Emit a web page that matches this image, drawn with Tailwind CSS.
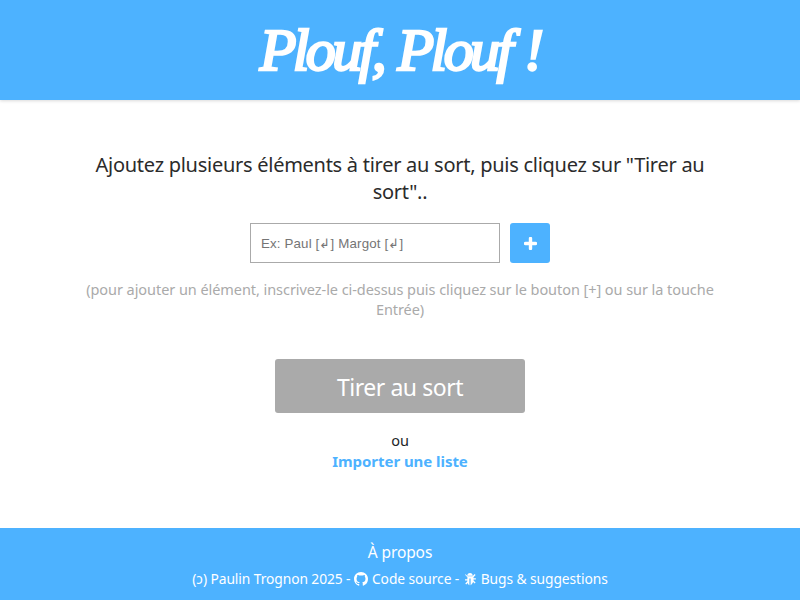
<!DOCTYPE html>
<html lang="fr">
<head>
    <meta charset="UTF-8">
    <meta name="viewport" content="width=device-width, initial-scale=1.0">
    <title>Plouf, Plouf !</title>
    <script src="https://cdn.jsdelivr.net/npm/@tailwindcss/browser@4"></script>
</head>
<body class="h-[600px] overflow-hidden bg-white font-['Noto_Sans',sans-serif] text-[#212529]">
    <div class="flex h-[600px] flex-col">
        <!-- Header -->
        <header class="flex h-[100px] items-center justify-center bg-[#4db2ff] shadow-[0_1px_3px_rgba(0,0,0,0.15)]">
            <h1 class="font-['Liberation_Serif',serif] text-[60px] font-normal italic leading-none tracking-[-3.6px] [word-spacing:3px] text-white [-webkit-text-stroke:2.5px_white]">Plouf, Plouf !</h1>
        </header>

        <!-- Main -->
        <main class="flex flex-1 flex-col items-center px-20 pt-[51px]">
            <p class="text-center text-[20px] leading-[27px] tracking-[-0.27px] text-[#2b2b2b]">Ajoutez plusieurs éléments à tirer au sort, puis cliquez sur "Tirer au sort"..</p>
            <div class="mt-[18px] flex items-center gap-2.5">
                <input type="text" placeholder="Ex: Paul [↲] Margot [↲]" class="h-10 w-[250px] border border-[#aaaaaa] px-2.5 font-['Liberation_Sans',sans-serif] text-[13.33px] tracking-[0.14px] outline-none placeholder:text-[#757575]">
                <button class="flex h-10 w-10 items-center justify-center rounded-[3px] bg-[#4db2ff]">
                    <svg class="h-[13px] w-[13px]" viewBox="0 0 13 13"><path d="M6.500 1.500v10M1.500 6.500h10" stroke="white" stroke-width="3.400" stroke-linecap="round"/></svg>
                </button>
            </div>
            <p class="mt-4 text-center text-[14.5px] leading-5 tracking-[-0.06px] text-[#aaaaaa]">(pour ajouter un élément, inscrivez-le ci-dessus puis cliquez sur le bouton [+] ou sur la touche Entrée)</p>
            <button class="mt-10 h-[54px] w-[250px] rounded-[3px] bg-[#aaaaaa] pt-0.5 text-[23px] tracking-[-0.45px] text-white">Tirer au sort</button>
            <p class="mt-[17px] text-[14.5px] leading-5">ou</p>
            <a class="mt-px text-[15px] font-bold leading-5 tracking-[-0.05px] text-[#4db2ff]">Importer une liste</a>
        </main>

        <!-- Footer -->
        <footer class="flex h-[72px] flex-col items-center bg-[#4db2ff] pt-[13px] text-white">
            <a class="text-[15.5px] leading-[22px] tracking-[-0.1px]">À propos</a>
            <div class="mt-[7px] flex items-center text-[13.8px] leading-[18px] tracking-[-0.08px]">
                <span>(ɔ) Paulin Trognon 2025 -&nbsp;</span>
                <svg class="mr-1 h-[14px] w-[14px]" viewBox="0 0 16 16" fill="white"><path d="M8 0C3.58 0 0 3.58 0 8c0 3.54 2.29 6.53 5.47 7.59.4.07.55-.17.55-.38 0-.19-.01-.82-.01-1.49-2.01.37-2.53-.49-2.69-.94-.09-.23-.48-.94-.82-1.13-.28-.15-.68-.52-.01-.53.63-.01 1.08.58 1.23.82.72 1.21 1.87.87 2.33.66.07-.52.28-.87.51-1.07-1.78-.2-3.64-.89-3.64-3.95 0-.87.31-1.59.82-2.15-.08-.2-.36-1.02.08-2.12 0 0 .67-.21 2.2.82.64-.18 1.32-.27 2-.27s1.36.09 2 .27c1.53-1.04 2.2-.82 2.2-.82.44 1.1.16 1.92.08 2.12.51.56.82 1.27.82 2.15 0 3.07-1.87 3.75-3.65 3.95.29.25.54.73.54 1.48 0 1.07-.01 1.93-.01 2.2 0 .21.15.46.55.38A8.01 8.01 0 0 0 16 8c0-4.42-3.58-8-8-8z"/></svg>
                <span>Code source -&nbsp;</span>
                <svg class="mr-1 h-[14px] w-[14px]" viewBox="0 0 16 16" fill="white"><path d="M4.800 4.300C4.800 2.400 6.200 1 8 1s3.200 1.400 3.200 3.300zM2.700 2.400l2.500 2.500h5.600l2.500-2.500 1.100 1.100-2.400 2.400v1.300h2.700v1.500h-2.700v1l2.400 2.400-1.100 1.100-1.700-1.700C10.100 14 9.400 15 8.700 15V7.300H7.300V15c-.7 0-1.400-1-1.900-2.500l-1.700 1.700-1.100-1.100 2.400-2.400v-1H2.300V8.200H5V5.900L2.600 3.500z"/></svg>
                <span>Bugs &amp; suggestions</span>
            </div>
        </footer>
    </div>
</body>
</html>
